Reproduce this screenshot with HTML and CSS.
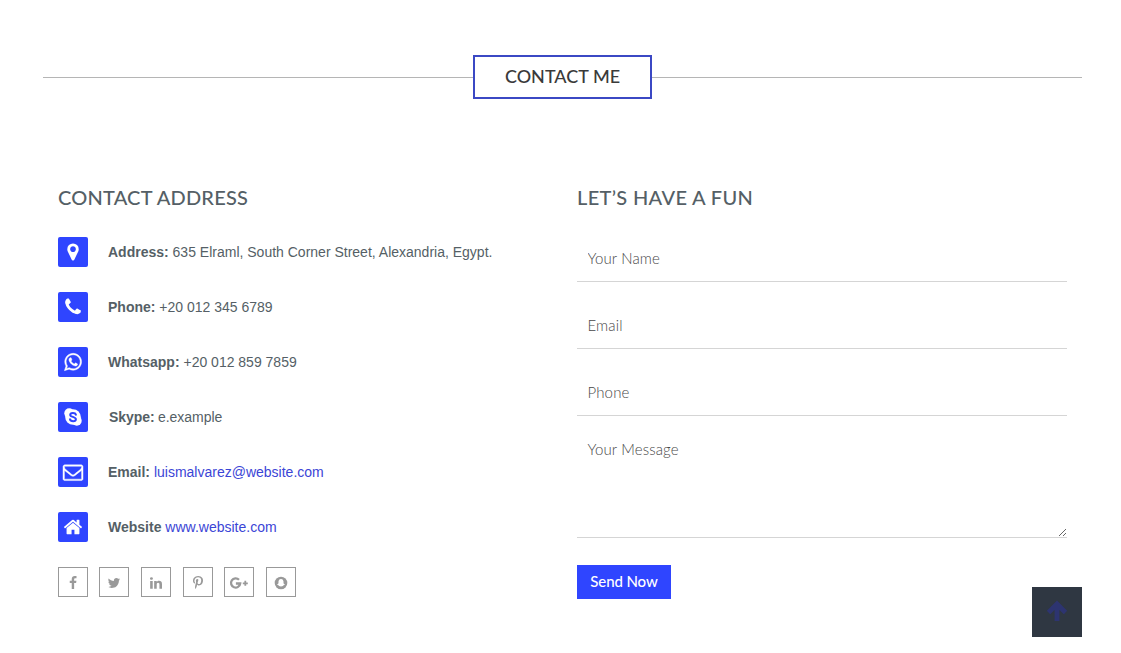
FILE: index.html
```html
<!DOCTYPE html>
<html lang="en">
<head>
<meta charset="utf-8">
<title>Contact Me</title>
<link rel="stylesheet" href="styles.css">
</head>
<body>
<section class="contact">
  <header class="section-title"><h2>CONTACT ME</h2></header>
  <div class="columns">
    <div class="column">
      <h3 class="heading-address">CONTACT ADDRESS</h3>
      <ul class="details">
        <li><span class="badge"><svg width="20" height="20" viewBox="0 0 1792 1792"><path d="M1152 640q0-106-75-181t-181-75-181 75-75 181 75 181 181 75 181-75 75-181zm256 0q0 109-33 179l-364 774q-16 33-47.500 52t-67.500 19-67.500-19-46.500-52l-365-774q-33-70-33-179 0-212 150-362t362-150 362 150 150 362z"/></svg></span><p><b>Address:</b> 635 Elraml, South Corner Street, Alexandria, Egypt.</p></li>
        <li><span class="badge"><svg width="20" height="20" viewBox="0 0 1792 1792"><path d="M1600 1240q0 27-10 70.500t-21 68.500q-21 50-122 106-94 51-186 51-27 0-52.500-3.500t-57.500-12.500-47.500-14.500-55.500-20.500-49-18q-98-35-175-83-128-79-264.500-215.500t-215.500-264.500q-48-77-83-175-3-9-18-49t-20.500-55.500-14.500-47.500-12.500-57.500-3.500-52.500q0-92 51-186 56-101 106-122 25-11 68.500-21t70.500-10q14 0 21 3 18 6 53 76 11 19 30 54t35 63.500 31 53.500q3 4 17.500 25t21.500 35.500 7 28.500q0 20-28.500 50t-62 55-62 53-28.500 46q0 9 5 22.500t8.500 20.500 14 24 11.500 19q76 137 174 235t235 174q2 1 19 11.500t24 14 20.500 8.500 22.500 5q18 0 46-28.500t53-62 55-62 50-28.500q14 0 28.500 7t35.500 21.500 25 17.500q25 15 53.500 31t63.500 35 54 30q70 35 76 53 3 7 3 21z"/></svg></span><p><b>Phone:</b> +20 012 345 6789</p></li>
        <li><span class="badge"><svg width="20" height="20" viewBox="0 0 1792 1792"><path class="bold" d="M1113 974q13 0 97.500 44t89.500 53q2 5 2 15 0 33-17 76-16 39-71 65.500t-102 26.500q-57 0-190-62-98-45-170-118t-148-185q-72-107-71-194v-8q3-91 74-158 24-22 52-22 6 0 18 1.500t19 1.500q19 0 26.500 6.500t15.500 27.500q8 20 33 88t25 75q0 21-34.500 57.500t-34.500 46.500q0 7 5 15 34 73 102 137 56 53 151 101 12 7 22 7 15 0 54-48.500t52-48.500zm-203 530q127 0 243.500-50t200.500-134 134-200.500 50-243.500-50-243.500-134-200.500-200.500-134-243.500-50-243.500 50-200.500 134-134 200.500-50 243.500q0 203 120 368l-79 233 242-77q158 104 345 104zm0-1382q153 0 292.500 60t240.500 161 161 240.500 60 292.500-60 292.500-161 240.500-240.500 161-292.500 60q-195 0-365-94l-417 134 136-405q-108-178-108-389 0-153 60-292.500t161-240.500 240.500-161 292.500-60z"/></svg></span><p><b>Whatsapp:</b> +20 012 859 7859</p></li>
        <li><span class="badge"><svg width="20" height="20" viewBox="0 0 20 20"><circle cx="10" cy="10" r="7.800"/><circle cx="6.200" cy="6.200" r="4.900"/><circle cx="13.800" cy="13.800" r="4.900"/><path class="skype-s" d="M12.900 7.700C12.300 5.400 7.200 5.300 7.200 7.900C7.200 10.200 12.900 9.500 12.900 12.200C12.900 14.800 7.500 14.700 7 12.300"/></svg></span><p class="skype"><b>Skype:</b> e.example</p></li>
        <li><span class="badge"><svg width="20" height="20" viewBox="0 0 1792 1792"><path class="bold" d="M1664 1504v-768q-32 36-69 66-268 206-426 338-51 43-83 67t-86.500 48.500-102.500 24.500h-2q-48 0-102.500-24.500t-86.500-48.500-83-67q-158-132-426-338-37-30-69-66v768q0 13 9.500 22.500t22.500 9.500h1472q13 0 22.500-9.500t9.500-22.500zm0-1051v-24.500l-.5-13-3-12.500-5.500-9-9-7.500-14-2.500h-1472q-13 0-22.500 9.500t-9.500 22.500q0 168 147 284 193 152 401 317 6 5 35 29.500t46 37.500 44.500 31.500 50.500 27.500 43 9h2q20 0 43-9t50.500-27.500 44.500-31.500 46-37.500 35-29.500q208-165 401-317 54-43 100.500-115.500t46.500-131.500zm128-37v1088q0 66-47 113t-113 47h-1472q-66 0-113-47t-47-113v-1088q0-66 47-113t113-47h1472q66 0 113 47t47 113z"/></svg></span><p><b>Email:</b> <a>luismalvarez@website.com</a></p></li>
        <li><span class="badge"><svg width="20" height="20" viewBox="0 0 1792 1792"><path d="M1472 992v480q0 26-19 45t-45 19h-384v-384h-256v384h-384q-26 0-45-19t-19-45v-480q0-1 .5-3t.5-3l575-474 575 474q1 2 1 6zm223-69l-62 74q-8 9-21 11h-3q-13 0-21-7l-692-577-692 577q-12 8-24 7-13-2-21-11l-62-74q-8-10-7-23.500t11-21.500l719-599q32-26 76-26t76 26l244 204v-195q0-14 9-23t23-9h192q14 0 23 9t9 23v408l219 182q10 8 11 21.500t-7 23.500z"/></svg></span><p><b>Website</b> <a>www.website.com</a></p></li>
      </ul>
      <div class="social">
        <span><svg width="14" height="14" viewBox="0 0 1792 1792"><path d="M1343 12v264h-157q-86 0-116 36t-30 108v189h293l-39 296h-254v759h-306v-759h-255v-296h255v-218q0-186 104-288.500t277-102.500q147 0 228 12z"/></svg></span>
        <span><svg width="14" height="14" viewBox="0 0 1792 1792"><path d="M1684 408q-67 98-162 167 1 14 1 42 0 130-38 259.500t-115.500 248.500-184.500 210.500-258 146-323 54.500q-271 0-496-145 35 4 78 4 225 0 401-138-105-2-188-64.500t-114-159.500q33 5 61 5 43 0 85-11-112-23-185.500-111.500t-73.500-205.500v-4q68 38 146 41-66-44-105-115t-39-154q0-88 44-163 121 149 294.500 238.500t371.500 99.500q-8-38-8-74 0-134 94.500-228.500t228.500-94.500q140 0 236 102 109-21 205-78-37 115-142 178 93-10 186-50z"/></svg></span>
        <span class="wide"><svg width="14" height="14" viewBox="0 0 1792 1792"><path d="M477 625v991h-330v-991h330zm21-306q1 73-50.500 122t-135.500 49h-2q-82 0-132-49t-50-122q0-74 51.500-122.500t134.500-48.500 133 48.500 51 122.500zm1166 729v568h-329v-530q0-105-40.500-164.500t-126.500-59.500q-63 0-105.500 34.500t-63.500 85.500q-11 30-11 81v553h-329q2-399 2-647t-1-296l-1-48h329v144h-2q20-32 41-56t56.500-52 87-43.500 114.500-15.500q171 0 275 113.500t104 332.500z"/></svg></span>
        <span class="wide"><svg width="14" height="14" viewBox="0 0 1792 1792"><path d="M256 597q0-108 37.500-203.500t103.500-166.500 152-123 185-78 202-26q158 0 294 66.500t221 193.500 85 287q0 96-19 188t-60 177-100 149.500-145 103-189 38.500q-68 0-135-32t-96-88q-10 39-28 112.500t-23.500 95-20.500 71-26 71-32 62.500-46 77.500-62 86.500l-14 5-9-10q-15-157-15-188 0-92 21.500-206.500t66.500-287.500 52-203q-32-65-32-169 0-83 52-156t132-73q61 0 95 40.500t34 102.500q0 66-44 191t-44 187q0 63 45 104.500t109 41.500q55 0 102-25t78.500-68 56-95 38-110.500 20-111 6.500-99.500q0-173-109.500-269.500t-285.500-96.500q-200 0-334 129.500t-134 328.500q0 44 12.500 85t27 65 27 45.500 12.500 30.500q0 28-15 73t-37 45q-2 0-17-3-51-15-90.500-56t-61-94.500-32.500-108-11-106.500z"/></svg></span>
        <span><svg width="20" height="14" viewBox="0 0 20 14"><path class="line" d="M10 3.800A4.600 4.600 0 1 0 11.200 7.500H6.900"/><path class="line plus" d="M16.300 4.800V9.800M13.800 7.300H18.800"/></svg></span>
        <span class="wide"><svg width="14" height="14" viewBox="0 0 14 14"><circle cx="7" cy="7" r="6.300"/><path class="ghost" d="M7 2.900C5.300 2.900 4.600 4 4.700 5.600L4 6L4.700 6.500C4.500 7.600 3.800 8.300 3 8.700L4.500 9.200L5 10L7 10.600L9 10L9.500 9.200L11 8.700C10.200 8.300 9.500 7.600 9.300 6.500L10 6L9.300 5.600C9.400 4 8.700 2.900 7 2.900Z"/></svg></span>
      </div>
    </div>
    <form class="column form">
      <h3 class="heading-form">LET’S HAVE A FUN</h3>
      <input type="text" placeholder="Your Name">
      <input type="email" placeholder="Email">
      <input type="text" placeholder="Phone">
      <textarea placeholder="Your Message"></textarea>
      <button type="button">Send Now</button>
    </form>
  </div>
</section>
<div class="to-top"><svg width="24" height="24" viewBox="0 0 24 24"><path d="M12 21V5M3.500 12.500L12 4L20.500 12.500"/></svg></div>
</body>
</html>
```
FILE: styles.css
```css
* { box-sizing: border-box; }
body { margin: 0; height: 653px; overflow: hidden; background: #fff; color: #555f66; font: 14px/20px "Liberation Sans", Arial, sans-serif; }
h2, h3, p, ul { margin: 0; padding: 0; }
.contact { width: 1039px; margin-left: 43px; padding-top: 55px; }
.section-title { display: flex; align-items: center; }
.section-title::before, .section-title::after { content: ""; flex: 1; height: 1px; background: #b5b5b5; }
.section-title h2 { width: 179px; height: 44px; border: 2px solid #3b48c4; text-align: center; color: #3a3a3a; font: 500 18px/38px Lato, sans-serif; white-space: nowrap; }
.columns { display: grid; grid-template-columns: 519px 520px; padding-top: 85px; }
.column { padding: 0 15px; }
h3 { height: 53px; color: #555f66; font: 500 20px/26px Lato, sans-serif; white-space: nowrap; }
.heading-address { letter-spacing: .2px; }
.heading-form { letter-spacing: .34px; }
.details { list-style: none; display: flex; flex-direction: column; gap: 25px; }
.details li { display: flex; align-items: center; height: 30px; gap: 20px; white-space: nowrap; }
.details p.skype { padding-left: 1px; word-spacing: -.6px; letter-spacing: -.03px; }
.details a { color: #3b45d6; }
.badge { display: flex; align-items: center; justify-content: center; flex: none; width: 30px; height: 30px; border-radius: 2px; background: #2f45ff; }
.badge svg { fill: #fff; margin-bottom: 1px; overflow: visible; }
.badge .bold { stroke: #fff; stroke-width: 40; }
.skype-s { fill: none; stroke: #2f45ff; stroke-width: 2; stroke-linecap: round; }
.social { display: flex; gap: 11px; padding-top: 25px; }
.social span { display: flex; align-items: center; justify-content: center; width: 30px; height: 30px; border: 1px solid #999; }
.social .wide { margin-left: 1px; }
.social svg { fill: #999; flex: none; margin-top: 2px; }
.social .line { fill: none; stroke: #999; stroke-width: 2.3; }
.social .plus { stroke-width: 1.8; }
.social .ghost { fill: #fff; }
.form { display: flex; flex-direction: column; align-items: flex-start; }
input, textarea { display: block; width: 490px; border: 0; border-bottom: 1px solid #d5d5d5; border-radius: 0; outline: 0; background: transparent; font: 300 15px/20px Lato, sans-serif; letter-spacing: .14px; padding: 0 10.5px; }
input { height: 45px; margin-bottom: 22px; padding-bottom: 2px; }
textarea { height: 101px; margin-top: -1px; padding-top: 2px; resize: vertical; }
::placeholder { color: #484848; opacity: 1; }
button { width: 94px; height: 34px; margin-top: 27px; padding: 0 0 2px; border: 0; background: #2f45ff; color: #fff; font: 500 15px/32px Lato, sans-serif; letter-spacing: -.1px; }
.to-top { position: fixed; left: 1032px; top: 587px; width: 50px; height: 50px; display: flex; align-items: center; justify-content: center; background: #2f3742; }
.to-top path { fill: none; stroke: #2d3470; stroke-width: 4.8; }
```
